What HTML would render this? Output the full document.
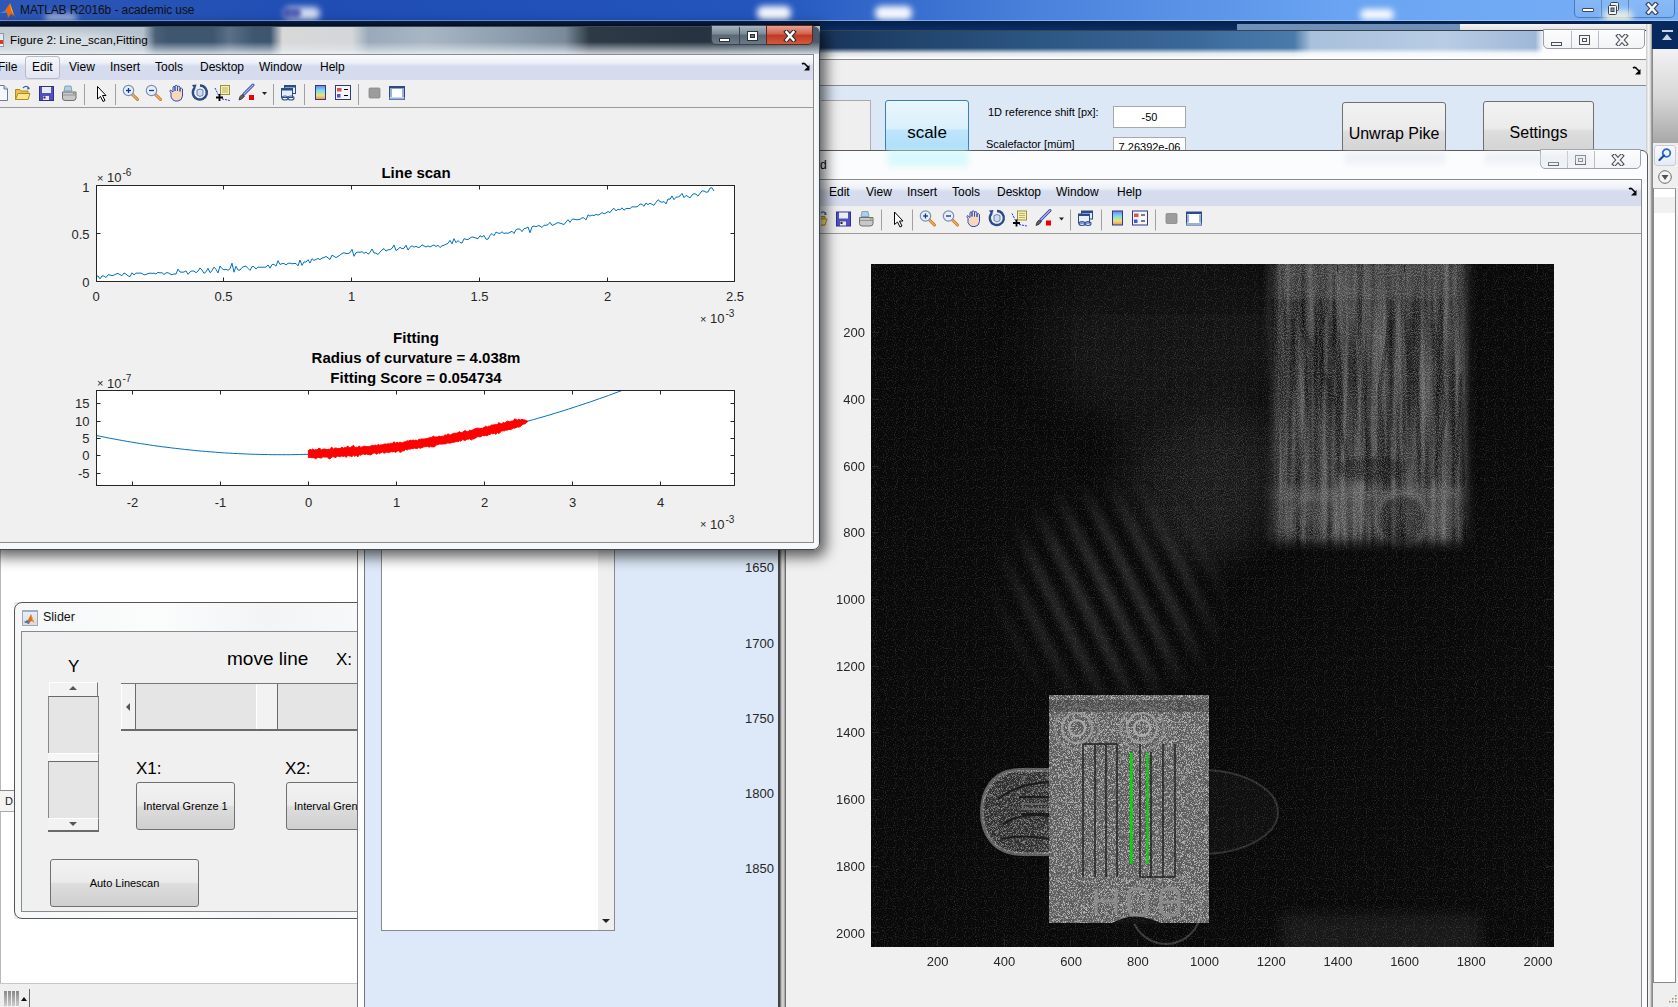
<!DOCTYPE html>
<html><head><meta charset="utf-8">
<style>
*{margin:0;padding:0;box-sizing:border-box}
html,body{width:1678px;height:1007px;overflow:hidden;background:#f0f0f0;font-family:"Liberation Sans",sans-serif;position:relative}
.a{position:absolute}
.t{position:absolute;white-space:nowrap;line-height:1}
</style></head><body>
<svg width="0" height="0" style="position:absolute"><defs><linearGradient id="cbgrad" x1="0" y1="0" x2="0" y2="1"><stop offset="0" stop-color="#8a70f0"/><stop offset=".35" stop-color="#70e0f0"/><stop offset=".7" stop-color="#f0e070"/><stop offset="1" stop-color="#f09060"/></linearGradient></defs></svg>
<div class="a" style="left:0;top:0;width:1678px;height:21px;background:linear-gradient(90deg,#2d58b8 0%,#1f4db4 20%,#2355bd 45%,#4a82dc 62%,#6aa4f2 80%,#78b0f6 100%)"></div>
<!-- CHROME_TOP -->
<div class="a" style="left:45px;top:14px;width:32px;height:7px;background:#fff;opacity:0.6;border-radius:6px;filter:blur(3px)"></div>
<div class="a" style="left:284px;top:7px;width:36px;height:13px;background:#fff;opacity:0.8;border-radius:6px;filter:blur(3px)"></div>
<div class="a" style="left:757px;top:6px;width:34px;height:14px;background:#fff;opacity:0.95;border-radius:6px;filter:blur(3px)"></div>
<div class="a" style="left:875px;top:6px;width:37px;height:14px;background:#fff;opacity:0.95;border-radius:6px;filter:blur(3px)"></div>
<div class="a" style="left:1360px;top:9px;width:34px;height:11px;background:#fff;opacity:0.95;border-radius:6px;filter:blur(3px)"></div>
<div class="a" style="left:283px;top:8px;width:18px;height:10px;background:#2030a0;opacity:.7;border-radius:4px;filter:blur(2px)"></div>
<svg class="a" style="left:0;top:2px" width="18" height="18" viewBox="0 0 18 18"><path d="M0 11 L5 8.5 L7 11 Z" fill="#3a8ad8"/><path d="M5 8.5 L10 1 L14 13 L16 15 L11 12 L8 16 L7 11 Z" fill="#e86a10"/><path d="M10 1 L14 13 L11 8 Z" fill="#f8b020"/></svg>
<div class="t" style="left:20px;top:4px;font-size:12px;letter-spacing:-0.1px;color:#101010">MATLAB R2016b - academic use</div>
<div class="a" style="left:1574px;top:-3px;width:101px;height:21px;border:1px solid rgba(40,70,130,.55);border-radius:0 0 5px 5px;background:linear-gradient(rgba(255,255,255,.15),rgba(255,255,255,.05))"></div>
<div class="a" style="left:1601px;top:0;width:1px;height:17px;background:rgba(40,70,130,.45)"></div>
<div class="a" style="left:1628px;top:0;width:1px;height:17px;background:rgba(40,70,130,.45)"></div>
<div class="a" style="left:1603px;top:10px;width:30px;height:12px;background:#fffbe0;opacity:.8;border-radius:8px;filter:blur(3px)"></div>
<div class="a" style="left:1582px;top:8px;width:12px;height:4px;background:#fff;border:1px solid #404858;border-radius:1px"></div>
<svg class="a" style="left:1606px;top:1px" width="16" height="15" viewBox="0 0 16 15"><rect x="4.5" y="1.5" width="8" height="8" rx="1" fill="#f0f0f0" stroke="#3a4250" stroke-width="1"/><rect x="2.5" y="4.5" width="8" height="9" rx="1" fill="#f4f4f4" stroke="#3a4250" stroke-width="1"/><rect x="5" y="7" width="3" height="3.5" fill="#7aa0d8" stroke="#3a4250" stroke-width="1"/></svg>
<svg class="a" style="left:1644px;top:2px" width="16" height="13" viewBox="0 0 16 13"><path d="M4.5 2.5 L11.5 10.5 M11.5 2.5 L4.5 10.5" stroke="#3a4250" stroke-width="4.8" stroke-linecap="square"/><path d="M4.5 2.5 L11.5 10.5 M11.5 2.5 L4.5 10.5" stroke="#f4f4f4" stroke-width="2.6" stroke-linecap="square"/></svg>
<!-- /CHROME_TOP -->
<div class="a" style="left:0;top:21px;width:1678px;height:5px;background:linear-gradient(#0a2250,#04152e)"></div>
<div class="a" style="left:0;top:20px;width:1678px;height:1px;background:rgba(190,215,250,.55)"></div>
<div class="a" style="left:820px;top:24px;width:832px;height:983px;background:#dde8f7"></div>
<div class="a" style="left:820px;top:21px;width:858px;height:10px;background:linear-gradient(#06204a,#0a3068)"></div>
<div class="a" style="left:1237px;top:24px;width:223px;height:7px;background:#7090b8"></div>
<div class="a" style="left:1460px;top:24px;width:192px;height:7px;background:linear-gradient(#f4f4f4,#e0e0e0)"></div>
<div class="a" style="left:820px;top:30px;width:832px;height:1px;background:#3a4450"></div>
<div class="a" style="left:820px;top:31px;width:832px;height:28px;background:linear-gradient(90deg,#18345a 0%,#22466e 12%,#2e5a88 30%,#3a6898 45%,#4272a4 50%,#4a7aa8 57%,#a8c0dc 59%,#b8cce4 75%,#a0b8d8 86%,#fcfcfd 87%,#ffffff 100%)"></div>
<div class="a" style="left:820px;top:48px;width:832px;height:11px;background:linear-gradient(rgba(255,255,255,0),rgba(255,255,255,.85) 50%,#fff)"></div>
<div class="a" style="left:1543px;top:29px;width:102px;height:20px;border:1px solid #9aa0a8;border-radius:0 0 5px 5px;background:linear-gradient(#fdfdfd,#f2f4f6)"></div>
<div class="a" style="left:1571px;top:31px;width:1px;height:17px;background:#b8bcc4"></div>
<div class="a" style="left:1598px;top:31px;width:1px;height:17px;background:#b8bcc4"></div>
<div class="a" style="left:1551px;top:42px;width:11px;height:4px;background:#f4f4f4;border:1px solid #4a5260"></div>
<div class="a" style="left:1579px;top:35px;width:11px;height:10px;background:#f4f4f4;border:1px solid #4a5260"><div class="a" style="left:2px;top:2px;width:5px;height:4px;background:#f4f4f4;border:1px solid #4a5260"></div></div>
<svg class="a" style="left:1614px;top:34px" width="16" height="12" viewBox="0 0 16 12"><path d="M4.5 2 L11.5 10 M11.5 2 L4.5 10" stroke="#4a5260" stroke-width="4.6" stroke-linecap="square"/><path d="M4.5 2 L11.5 10 M11.5 2 L4.5 10" stroke="#f4f4f4" stroke-width="2.4" stroke-linecap="square"/></svg>
<div class="a" style="left:820px;top:59px;width:826px;height:27px;background:#efefef;border-top:1px solid #8a8a8a;border-bottom:1px solid #8a8a8a"></div>
<svg class="a" style="left:1632px;top:66px" width="10" height="10" viewBox="0 0 10 10"><path d="M1 2 Q3 0.5 5 3 L7 5" fill="none" stroke="#000" stroke-width="1.6"/><path d="M8.5 3 V8.5 H3 Z" fill="#000"/></svg>
<div class="a" style="left:1646px;top:24px;width:6px;height:983px;background:linear-gradient(90deg,#c8c8c8,#f4f4f4 40%,#e0e0e0 70%,#8a8a8a)"></div>
<div class="a" style="left:821px;top:100px;width:50px;height:60px;background:#efefef;border-top:1px solid #a8a8a8;border-right:1px solid #b0b0b0"></div>
<div class="a" style="left:885px;top:100px;width:84px;height:60px;border:1px solid #3c7fb1;border-radius:3px;background:linear-gradient(#eaf6fd 0%,#d9f0fc 48%,#bee6fd 50%,#a7d9f5 100%)"></div>
<div class="t" style="left:885px;top:124px;width:84px;text-align:center;font-size:17px;color:#000">scale</div>
<div class="t" style="left:988px;top:107px;font-size:11px;color:#000">1D reference shift [px]:</div>
<div class="a" style="left:1113px;top:106px;width:73px;height:22px;background:#fff;border:1px solid #a8a8a8"></div>
<div class="t" style="left:1113px;top:112px;width:73px;text-align:center;font-size:11px;color:#000">-50</div>
<div class="t" style="left:986px;top:139px;font-size:11px;color:#000">Scalefactor [müm]</div>
<div class="a" style="left:1113px;top:137px;width:73px;height:22px;background:#fff;border:1px solid #a8a8a8"></div>
<div class="t" style="left:1113px;top:142px;width:73px;text-align:center;font-size:11px;color:#000">7.26392e-06</div>
<div class="a" style="left:1342px;top:102px;width:104px;height:60px;border:1px solid #707070;border-radius:3px;background:linear-gradient(#f2f2f2 0%,#ebebeb 45%,#dddddd 50%,#cfcfcf 100%)"></div>
<div class="t" style="left:1342px;top:126px;width:104px;text-align:center;font-size:16px;color:#000">Unwrap Pike</div>
<div class="a" style="left:1483px;top:101px;width:111px;height:60px;border:1px solid #707070;border-radius:3px;background:linear-gradient(#f2f2f2 0%,#ebebeb 45%,#dddddd 50%,#cfcfcf 100%)"></div>
<div class="t" style="left:1483px;top:125px;width:111px;text-align:center;font-size:16px;color:#000">Settings</div>
<div class="a" style="left:1652px;top:21px;width:26px;height:986px;background:#efefef;border-left:1px solid #8a8a8a"></div>
<div class="a" style="left:1652px;top:21px;width:26px;height:28px;background:#08295e"></div>
<div class="a" style="left:1662px;top:30px;width:11px;height:2px;background:#c8d4e4"></div>
<div class="a" style="left:1662px;top:34px;width:0;height:0;border-left:5.5px solid transparent;border-right:5.5px solid transparent;border-bottom:6px solid #c8d4e4"></div>
<div class="a" style="left:1653px;top:49px;width:25px;height:94px;background:linear-gradient(#f2f2f2,#d8d8d8 50%,#a8a8a8)"></div>
<div class="a" style="left:1653px;top:143px;width:25px;height:25px;background:#efefef"></div>
<div class="a" style="left:1654px;top:145px;width:22px;height:21px;border:1px solid #c8ccd8;border-radius:3px;background:linear-gradient(#f8faff,#e4eaf6)"></div>
<svg class="a" style="left:1657px;top:147px" width="16" height="16" viewBox="0 0 16 16"><circle cx="9.5" cy="6" r="3.8" fill="none" stroke="#2a6ad0" stroke-width="1.8"/><path d="M7 8.5 L2.5 13" stroke="#1a4aa0" stroke-width="2.2" stroke-linecap="round"/></svg>
<svg class="a" style="left:1657px;top:169px" width="16" height="16" viewBox="0 0 16 16"><circle cx="8" cy="8" r="6.3" fill="#f4f4f4" stroke="#6a6a6a" stroke-width="1"/><path d="M4.5 6 H11.5 L8 11 Z" fill="#505050"/></svg>
<div class="a" style="left:1653px;top:188px;width:23px;height:795px;background:#fff;border:1px solid #8a8a8a;border-top:1px solid #b0b0b0"></div>
<div class="a" style="left:1654px;top:197px;width:21px;height:16px;background:#f0f0f0"></div>
<svg class="a" style="left:1666px;top:994px" width="12" height="12" viewBox="0 0 12 12"><g fill="#a09070"><rect x="9" y="1" width="1.5" height="1.5"/><rect x="6" y="4" width="1.5" height="1.5"/><rect x="9" y="4" width="1.5" height="1.5"/><rect x="3" y="7" width="1.5" height="1.5"/><rect x="6" y="7" width="1.5" height="1.5"/><rect x="9" y="7" width="1.5" height="1.5"/></g></svg>
<!-- bottom-left white area (main MATLAB) -->
<div class="a" style="left:0;top:549px;width:357px;height:435px;background:#fff;border-left:1px solid #b8b8b8"></div>
<div class="a" style="left:0;top:790px;width:14px;height:22px;background:#f4f4f4;border-top:1px solid #8c8c8c;border-bottom:1px solid #aaa"></div>
<div class="t" style="left:5px;top:796px;font-size:11px;color:#222">D</div>
<div class="a" style="left:0;top:983px;width:357px;height:24px;background:#efefef;border-top:1px solid #c8c8c8"></div>
<div class="a" style="left:4px;top:991px;width:3px;height:15px;background:linear-gradient(#888,#ccc)"></div>
<div class="a" style="left:8px;top:991px;width:3px;height:15px;background:linear-gradient(#888,#ccc)"></div>
<div class="a" style="left:12px;top:991px;width:3px;height:15px;background:linear-gradient(#888,#ccc)"></div>
<div class="a" style="left:16px;top:991px;width:3px;height:15px;background:linear-gradient(#888,#ccc)"></div>
<div class="a" style="left:21px;top:997px;width:0;height:0;border-left:3px solid transparent;border-right:3px solid transparent;border-bottom:4px solid #111"></div>
<div class="a" style="left:29px;top:989px;width:1px;height:18px;background:#666"></div>


<!-- Slider window -->
<div class="a" style="left:14px;top:602px;width:343px;height:317px;overflow:hidden">
  <div class="a" style="left:0;top:0;width:360px;height:317px;background:linear-gradient(90deg,#f6f7f8,#fbfcfc 40%,#f2f4f6 70%,#f8f9fa);border:1px solid #555;border-radius:8px;box-shadow:0 0 8px rgba(0,0,0,.3)"></div>
  <div class="a" style="left:8px;top:8px;width:16px;height:16px;background:linear-gradient(#e8eef4,#d8dde4);border:1px solid #a0a8b0;border-top:2px solid #9ab0c8"></div>
  <svg class="a" style="left:8px;top:9px" width="16" height="16" viewBox="0 0 16 16"><path d="M2 11 L6 9 L9 3 L12 11 L14 12 L9 10 L7 13 Z" fill="#e06a1a"/><path d="M2 11 L6 9 L7 13 Z" fill="#3a7ad0"/><path d="M9 3 L12 11 L10 9 Z" fill="#f4b030"/></svg>
  <div class="t" style="left:29px;top:9px;font-size:12.5px;color:#111">Slider</div>
  <div class="a" style="left:7px;top:29px;width:340px;height:281px;background:#f0f0f0;border:1px solid #8a8a8a"></div>
</div>
<div class="t" style="left:68px;top:658px;font-size:17px;color:#000">Y</div>
<div class="t" style="left:227px;top:649px;font-size:19px;color:#000">move line</div>
<div class="t" style="left:336px;top:651px;font-size:17px;color:#000">X:</div>
<div class="t" style="left:136px;top:760px;font-size:17px;color:#000">X1:</div>
<div class="t" style="left:285px;top:760px;font-size:17px;color:#000">X2:</div>
<!-- vertical scrollbar Y -->
<div class="a" style="left:48px;top:681px;width:51px;height:151px;background:#f0f0f0"></div>
<div class="a" style="left:49px;top:682px;width:49px;height:14px;background:#f2f2f2;border-top:1px solid #fff;border-left:1px solid #fff;border-right:1px solid #777"></div>
<div class="a" style="left:69px;top:686px;width:0;height:0;border-left:4px solid transparent;border-right:4px solid transparent;border-bottom:4px solid #555"></div>
<div class="a" style="left:48px;top:696px;width:51px;height:57px;background:#e5e5e5;border-top:1px solid #6a6a6a;border-left:1px solid #888;border-right:1px solid #888"></div>
<div class="a" style="left:48px;top:753px;width:51px;height:8px;background:#f6f6f6;border-top:1px solid #fff;border-right:1px solid #888"></div>
<div class="a" style="left:48px;top:761px;width:51px;height:57px;background:#e5e5e5;border-top:1px solid #6a6a6a;border-left:1px solid #888;border-right:1px solid #888"></div>
<div class="a" style="left:48px;top:818px;width:51px;height:14px;background:#f2f2f2;border-top:1px solid #fff;border-right:1px solid #777;border-bottom:2px solid #6a6a6a"></div>
<div class="a" style="left:69px;top:822px;width:0;height:0;border-left:4px solid transparent;border-right:4px solid transparent;border-top:4px solid #555"></div>
<!-- horizontal slider -->
<div class="a" style="left:121px;top:683px;width:236px;height:48px;background:#e5e5e5;border-top:1px solid #777;border-bottom:2px solid #6a6a6a"></div>
<div class="a" style="left:121px;top:684px;width:15px;height:45px;background:#f2f2f2;border-left:1px solid #fff;border-right:1px solid #6a6a6a"></div>
<div class="a" style="left:126px;top:703px;width:0;height:0;border-top:4px solid transparent;border-bottom:4px solid transparent;border-right:4px solid #555"></div>
<div class="a" style="left:256px;top:684px;width:22px;height:45px;background:#f2f2f2;border-left:1px solid #fff;border-right:1px solid #6a6a6a"></div>
<!-- buttons -->
<div class="a" style="left:136px;top:782px;width:99px;height:48px;border:1px solid #707070;border-radius:3px;background:linear-gradient(#f2f2f2 0%,#ebebeb 48%,#dddddd 52%,#cfcfcf 100%)"></div>
<div class="t" style="left:136px;top:801px;width:99px;text-align:center;font-size:11px;color:#000">Interval Grenze 1</div>
<div class="a" style="left:286px;top:782px;width:80px;height:48px;border:1px solid #707070;border-radius:3px;background:linear-gradient(#f2f2f2 0%,#ebebeb 48%,#dddddd 52%,#cfcfcf 100%)"></div>
<div class="t" style="left:294px;top:801px;font-size:11px;color:#000">Interval Gren</div>
<div class="a" style="left:50px;top:859px;width:149px;height:48px;border:1px solid #707070;border-radius:3px;background:linear-gradient(#f2f2f2 0%,#ebebeb 48%,#dddddd 52%,#cfcfcf 100%)"></div>
<div class="t" style="left:50px;top:878px;width:149px;text-align:center;font-size:11px;color:#000">Auto Linescan</div>

<!-- middle back-window area -->
<div class="a" style="left:357px;top:549px;width:8px;height:458px;background:#fff;border-left:1px solid #777;border-right:1px solid #777"></div>
<div class="a" style="left:365px;top:549px;width:414px;height:458px;background:#dde9f8"></div>
<div class="a" style="left:381px;top:549px;width:234px;height:382px;background:#fff;border:1px solid #8a8a8a;border-top:none"></div>
<div class="a" style="left:598px;top:549px;width:16px;height:381px;background:#efefef"></div>
<div class="a" style="left:602px;top:919px;width:0;height:0;border-left:4px solid transparent;border-right:4px solid transparent;border-top:4px solid #222"></div>
<div class="t" style="left:730px;top:561px;width:44px;text-align:right;font-size:13px;color:#262626">1650</div>
<div class="t" style="left:730px;top:637px;width:44px;text-align:right;font-size:13px;color:#262626">1700</div>
<div class="t" style="left:730px;top:712px;width:44px;text-align:right;font-size:13px;color:#262626">1750</div>
<div class="t" style="left:730px;top:787px;width:44px;text-align:right;font-size:13px;color:#262626">1800</div>
<div class="t" style="left:730px;top:862px;width:44px;text-align:right;font-size:13px;color:#262626">1850</div>
<div class="a" style="left:778px;top:549px;width:8px;height:458px;background:linear-gradient(90deg,#333 0,#555 1px,#aaa 2px,#ddd 4px,#999 6px,#444 7px,#444 8px)"></div>

<div class="a" style="left:779px;top:150px;width:869px;height:870px;background:#fbfcfd;border-radius:6px 6px 0 0;border:1px solid #5a5a5a"></div>
<div class="a" style="left:779px;top:549px;width:8px;height:458px;background:linear-gradient(90deg,#333 0,#555 1px,#aaa 2px,#ddd 4px,#999 6px,#444 7px,#444 8px)"></div>
<div class="a" style="left:1540px;top:149px;width:101px;height:20px;border:1px solid #9aa0a8;border-radius:0 0 5px 5px;background:linear-gradient(#fdfdfd,#f2f4f6)"></div>
<div class="a" style="left:1567px;top:151px;width:1px;height:17px;background:#b8bcc4"></div>
<div class="a" style="left:1594px;top:151px;width:1px;height:17px;background:#b8bcc4"></div>
<div class="a" style="left:1548px;top:162px;width:11px;height:4px;background:#f4f4f4;border:1px solid #4a5260"></div>
<div class="a" style="left:1575px;top:155px;width:11px;height:10px;background:#f4f4f4;border:1px solid #4a5260"><div class="a" style="left:2px;top:2px;width:5px;height:4px;background:#f4f4f4;border:1px solid #4a5260"></div></div>
<svg class="a" style="left:1610px;top:154px" width="16" height="12" viewBox="0 0 16 12"><path d="M4.5 2 L11.5 10 M11.5 2 L4.5 10" stroke="#4a5260" stroke-width="4.6" stroke-linecap="square"/><path d="M4.5 2 L11.5 10 M11.5 2 L4.5 10" stroke="#f4f4f4" stroke-width="2.4" stroke-linecap="square"/></svg>
<div class="t" style="left:820px;top:159px;font-size:12px;color:#000">d</div>
<div class="a" style="left:888px;top:150px;width:80px;height:16px;background:rgba(200,248,252,.7);filter:blur(3px)"></div>
<div class="a" style="left:1345px;top:152px;width:100px;height:12px;background:rgba(225,232,240,.5);filter:blur(3px)"></div>
<div class="a" style="left:1485px;top:152px;width:105px;height:12px;background:rgba(225,232,240,.5);filter:blur(3px)"></div>
<div class="a" style="left:786px;top:179px;width:856px;height:28px;background:linear-gradient(#fafbfd 0%,#eef1f8 30%,#d5dcee 45%,#d6dcee 100%);border-top:1px solid #8a8a8a;border-bottom:1px solid #8a8a8a;border-right:1px solid #8a8a8a"></div>
<div class="a" style="left:786px;top:206px;width:856px;height:28px;background:#f0f0f0;border-bottom:1px solid #9a9a9a;border-right:1px solid #8a8a8a"></div>
<div class="a" style="left:786px;top:234px;width:856px;height:773px;background:#f0f0f0;border-right:1px solid #8a8a8a"></div>
<div class="t" style="left:829px;top:186px;font-size:12px;color:#000">Edit</div>
<div class="t" style="left:866px;top:186px;font-size:12px;color:#000">View</div>
<div class="t" style="left:907px;top:186px;font-size:12px;color:#000">Insert</div>
<div class="t" style="left:952px;top:186px;font-size:12px;color:#000">Tools</div>
<div class="t" style="left:997px;top:186px;font-size:12px;color:#000">Desktop</div>
<div class="t" style="left:1056px;top:186px;font-size:12px;color:#000">Window</div>
<div class="t" style="left:1117px;top:186px;font-size:12px;color:#000">Help</div>
<svg class="a" style="left:1628px;top:187px" width="10" height="10" viewBox="0 0 10 10"><path d="M1 2 Q3 0.5 5 3 L7 5" fill="none" stroke="#000" stroke-width="1.6"/><path d="M8.5 3 V8.5 H3 Z" fill="#000"/></svg>
<svg class="a" style="left:813px;top:0" width="420" height="240" viewBox="813 0 420 240"><defs><clipPath id="clipfig1tb"><rect x="821" y="200" width="420" height="40"/></clipPath></defs><g clip-path="url(#clipfig1tb)"><g transform="translate(797 125.5)">
<path d="M-4 85.5 H4 L7.5 89 V100.5 H-4 Z" fill="#f4f8fc" stroke="#6a7a9a" stroke-width="1"/><path d="M4 85.5 V89 H7.5" fill="#c8d4e8" stroke="#6a7a9a"/>
<path d="M15.5 89.5 H20 L21.5 91 H28 V99.5 H15.5 Z" fill="#e8c050" stroke="#b08a20"/><path d="M15.5 99.5 L18 93.5 H30 L28 99.5 Z" fill="#fce68a" stroke="#b08a20"/><path d="M23 88 Q26 85 29 88" fill="none" stroke="#3060a0" stroke-width="1.2"/><path d="M28 86.5 L30 89 L27 89.5 Z" fill="#3060a0"/>
<rect x="39.5" y="86.5" width="14" height="14" fill="#5050c0" stroke="#30308a"/><rect x="42" y="87" width="9" height="6" fill="#e8eef8"/><rect x="43" y="96" width="6" height="4" fill="#e8e8e8"/><rect x="43.5" y="96.5" width="2" height="2" fill="#222"/>
<path d="M65 86 H71 L72 91 H64 Z" fill="#a8d0f0" stroke="#8090a0" stroke-width=".8"/><path d="M62.5 92 H76 V98 Q76 100.5 73 100.5 H65 Q62.5 100.5 62.5 98 Z" fill="#c8c8c8" stroke="#707070" stroke-width="1"/><path d="M63 95 H76" stroke="#888" stroke-width=".8"/><rect x="73" y="93" width="1.5" height="1" fill="#30b030"/>
<path d="M84.5 84 V105" stroke="#a0a0a0" stroke-width="1"/>
<path d="M115.5 84 V105" stroke="#a0a0a0" stroke-width="1"/>
<path d="M273.5 84 V105" stroke="#a0a0a0" stroke-width="1"/>
<path d="M304.5 84 V105" stroke="#a0a0a0" stroke-width="1"/>
<path d="M358.5 84 V105" stroke="#a0a0a0" stroke-width="1"/>
<path d="M97.5 86.5 V99 L100.5 96.5 L103 101.5 L105 100.5 L102.5 95.5 H106 Z" fill="#fff" stroke="#000" stroke-width="1" stroke-linejoin="miter"/>
<path d="M132.5 94.5 L137.5 99.5" stroke="#c07020" stroke-width="3" stroke-linecap="round"/><path d="M132.5 94.5 L137.5 99.5" stroke="#f0b060" stroke-width="1.5" stroke-linecap="round"/>
<circle cx="128.5" cy="90.5" r="5.2" fill="#e4f0fc" stroke="#7890b8" stroke-width="1.2"/>
<path d="M126.0 90.5 H131.0" stroke="#203080" stroke-width="1.3"/>
<path d="M128.5 88 V93" stroke="#203080" stroke-width="1.3"/>
<path d="M155.5 94.5 L160.5 99.5" stroke="#c07020" stroke-width="3" stroke-linecap="round"/><path d="M155.5 94.5 L160.5 99.5" stroke="#f0b060" stroke-width="1.5" stroke-linecap="round"/>
<circle cx="151.5" cy="90.5" r="5.2" fill="#e4f0fc" stroke="#7890b8" stroke-width="1.2"/>
<path d="M149.0 90.5 H154.0" stroke="#203080" stroke-width="1.3"/>
<path d="M171 93 Q169 91 170.5 90 L173 92 V87 Q174 85.5 175 87 V91 V86 Q176 84.5 177.5 86 V91 V86.5 Q179 85.5 180 87 V91.5 V88.5 Q181.5 87.5 182.5 89 V96 Q182 100.5 178 101 H175 Q172.5 100.5 171 97 Z" fill="#f8d8b8" stroke="#3050c0" stroke-width="1"/>
<path d="M194.5 88 A7 7 0 1 0 200 85.5" fill="none" stroke="#2a4a88" stroke-width="2.4"/><path d="M192 85 L196.5 84.5 L195 89.5 Z" fill="#2a4a88"/><path d="M197 90 L200 89 L203 90 V95 L200 96.5 L197 95 Z" fill="#d0dcf0" stroke="#4a6aa8" stroke-width=".8"/>
<rect x="220.5" y="85.5" width="9" height="9" fill="#f8f0b0" stroke="#9a9040"/><path d="M222 88 H228 M222 90 H228 M222 92 H228" stroke="#a09850" stroke-width=".7"/><path d="M215 88 L219 96 M222 99 L230 100.5" stroke="#2030f0" stroke-width="1" stroke-dasharray="2 1"/><path d="M219.5 94 V101 M216 97.5 H223" stroke="#000" stroke-width="1.8"/>
<path d="M244 94 L253 85" stroke="#3040a0" stroke-width="3" stroke-linecap="round"/><path d="M244 94 L253 85" stroke="#a8b8f0" stroke-width="1.2" stroke-linecap="round"/><path d="M239 100 Q239.5 96 242 94.5 L244.5 96 Q242.5 99.5 239 100 Z" fill="#606060" stroke="#303030" stroke-width=".8"/><rect x="249" y="95" width="5" height="5" fill="#f00000"/>
<path d="M262 92 H267 L264.5 95 Z" fill="#202020"/>
<rect x="284.5" y="85.5" width="11" height="8" fill="#e8eef8" stroke="#2a4a8a"/><rect x="284.5" y="85.5" width="11" height="2" fill="#2a4a8a"/><rect x="281.5" y="88.5" width="11" height="9" fill="#e8eef8" stroke="#2a4a8a"/><rect x="281.5" y="88.5" width="11" height="2" fill="#2a4a8a"/><ellipse cx="285" cy="98" rx="3" ry="2" fill="none" stroke="#3a5a9a" stroke-width="1.2"/><ellipse cx="291" cy="98" rx="3" ry="2" fill="none" stroke="#3a5a9a" stroke-width="1.2"/>
<rect x="315.5" y="85.5" width="10" height="14" fill="url(#cbgrad)" stroke="#2a3a88"/>
<rect x="335.5" y="85.5" width="15" height="14" fill="#f4f6fa" stroke="#2a3a88"/><rect x="337" y="88" width="4.5" height="3.5" fill="#e05050"/><rect x="337" y="94" width="3.5" height="3.5" fill="#5050e0"/><path d="M344 89.5 H348 M344 95.5 H348" stroke="#000" stroke-width="1.2"/>
<rect x="369" y="88" width="11" height="10" rx="1" fill="#9c9c9c" stroke="#888" stroke-width=".8"/>
<rect x="389.5" y="86.5" width="15" height="13" fill="#fff" stroke="#2a4a8a" stroke-width="1"/><rect x="389.5" y="86.5" width="15" height="2" fill="#2a4a8a"/><rect x="389.5" y="97.5" width="15" height="2" fill="#9ab0d8"/><path d="M391 89 V97 M403 89 V97" stroke="#9ab0d8" stroke-width="2"/>
</g></g></svg>
<!-- IMAGE -->
<svg class="a" style="left:871px;top:264px" width="683" height="683" viewBox="0 0 683 683">
<defs>
<filter id="noise" x="0" y="0" width="100%" height="100%" color-interpolation-filters="sRGB">
  <feTurbulence type="fractalNoise" baseFrequency="0.9" numOctaves="1" seed="3" result="n"/>
  <feColorMatrix in="n" type="matrix" values="0 0 0 0 1  0 0 0 0 1  0 0 0 0 1  5 0 0 0 -2.6"/>
</filter>
<filter id="noise2" x="0" y="0" width="100%" height="100%" color-interpolation-filters="sRGB">
  <feTurbulence type="fractalNoise" baseFrequency="1.6" numOctaves="1" seed="11" result="n"/>
  <feColorMatrix in="n" type="matrix" values="0 0 0 0 1  0 0 0 0 1  0 0 0 0 1  5 0 0 0 -2.3"/>
</filter>
<filter id="noise3" x="0" y="0" width="100%" height="100%" color-interpolation-filters="sRGB">
  <feTurbulence type="fractalNoise" baseFrequency="0.95" numOctaves="1" seed="21" result="n"/>
  <feColorMatrix in="n" type="matrix" values="0 0 0 0 1  0 0 0 0 1  0 0 0 0 1  5 0 0 0 -2.2"/>
</filter>
<filter id="streak" x="0" y="0" width="100%" height="100%" color-interpolation-filters="sRGB">
  <feTurbulence type="fractalNoise" baseFrequency="0.14 0.006" numOctaves="3" seed="5" result="n"/>
  <feColorMatrix in="n" type="matrix" values="0.55 0 0 0 -0.075  0.55 0 0 0 -0.075  0.55 0 0 0 -0.075  0 0 0 0 1"/>
</filter>
<filter id="blur8" x="-50%" y="-50%" width="200%" height="200%" color-interpolation-filters="sRGB"><feGaussianBlur stdDeviation="8"/></filter>
<filter id="blur16" x="-50%" y="-50%" width="200%" height="200%" color-interpolation-filters="sRGB"><feGaussianBlur stdDeviation="18"/></filter>
<filter id="blur6" x="-50%" y="-50%" width="200%" height="200%" color-interpolation-filters="sRGB"><feGaussianBlur stdDeviation="6"/></filter>
<filter id="blur4" x="-50%" y="-50%" width="200%" height="200%" color-interpolation-filters="sRGB"><feGaussianBlur stdDeviation="4"/></filter>
<filter id="blur3" x="-50%" y="-50%" width="200%" height="200%" color-interpolation-filters="sRGB"><feGaussianBlur stdDeviation="3"/></filter>
<filter id="blur2" x="-50%" y="-50%" width="200%" height="200%" color-interpolation-filters="sRGB"><feGaussianBlur stdDeviation="2"/></filter>
<filter id="blur1" x="-50%" y="-50%" width="200%" height="200%" color-interpolation-filters="sRGB"><feGaussianBlur stdDeviation="0.7"/></filter>
<radialGradient id="stripemask" cx="0.5" cy="0.5" r="0.5">
  <stop offset="0" stop-color="#fff" stop-opacity="1"/>
  <stop offset="0.6" stop-color="#fff" stop-opacity="0.7"/>
  <stop offset="1" stop-color="#fff" stop-opacity="0"/>
</radialGradient>
<mask id="sm"><ellipse cx="240" cy="330" rx="125" ry="120" fill="url(#stripemask)"/></mask>
<mask id="halo"><ellipse cx="330" cy="200" rx="75" ry="95" fill="#fff" filter="url(#blur16)"/><ellipse cx="300" cy="80" rx="120" ry="90" fill="#777" filter="url(#blur16)"/></mask>
<mask id="urm"><rect x="402" y="-10" width="192" height="288" fill="#fff" filter="url(#blur6)"/></mask>
<pattern id="stripes" width="26" height="683" patternUnits="userSpaceOnUse" patternTransform="rotate(-27)">
  <rect x="4" y="-50" width="11" height="800" fill="#383838" filter="url(#blur3)"/>
</pattern>
<clipPath id="img"><rect x="0" y="0" width="683" height="683"/></clipPath>
<clipPath id="lr"><rect x="178" y="431" width="160" height="228"/></clipPath>
</defs>
<g clip-path="url(#img)">
<rect x="0" y="0" width="683" height="683" fill="#090909"/>
<!-- broad faint glows -->
<ellipse cx="330" cy="210" rx="80" ry="90" fill="#111" filter="url(#blur16)"/>
<ellipse cx="290" cy="70" rx="130" ry="90" fill="#101010" filter="url(#blur16)"/>
<ellipse cx="345" cy="215" rx="40" ry="70" fill="#161616" filter="url(#blur16)"/>
<g mask="url(#halo)"><rect x="200" y="50" width="250" height="320" filter="url(#noise3)" opacity="0.1"/></g>
<!-- stripes -->
<g mask="url(#sm)"><rect x="0" y="150" width="683" height="400" fill="url(#stripes)" opacity="0.7"/></g>
<!-- upper-right textured rect -->
<g mask="url(#urm)"><rect x="380" y="-20" width="240" height="320" filter="url(#streak)"/>
<path d="M430 60 L465 140" stroke="#141414" stroke-width="5" opacity="0.5"/>
<path d="M465 140 L478 205" stroke="#141414" stroke-width="4" opacity="0.5"/>
<path d="M520 50 L508 130" stroke="#141414" stroke-width="4" opacity="0.5"/>
<path d="M508 130 L515 225" stroke="#141414" stroke-width="4" opacity="0.5"/>
<path d="M562 60 L575 150" stroke="#141414" stroke-width="5" opacity="0.5"/>
<path d="M575 150 L562 215" stroke="#141414" stroke-width="4" opacity="0.5"/>
<path d="M455 45 L442 105" stroke="#141414" stroke-width="3" opacity="0.5"/>
<path d="M590 110 L586 200" stroke="#141414" stroke-width="3" opacity="0.5"/>
<rect x="380" y="0" width="240" height="35" fill="#555" opacity="0.35" filter="url(#blur2)"/>
<rect x="380" y="228" width="240" height="34" fill="#555" opacity="0.3" filter="url(#blur2)"/>
<rect x="380" y="222" width="240" height="14" fill="#6a6a6a" opacity="0.35" filter="url(#blur4)"/>
<ellipse cx="531" cy="255" rx="26" ry="26" fill="#1a1a1a" opacity="0.5" stroke="#6a6a6a" stroke-width="4" filter="url(#blur2)"/>
<ellipse cx="445" cy="255" rx="25" ry="22" fill="none" stroke="#5a5a5a" stroke-width="3" opacity="0.6" filter="url(#blur2)"/>
<ellipse cx="500" cy="205" rx="35" ry="12" fill="#141414" opacity="0.6" filter="url(#blur2)"/>
<rect x="380" y="-20" width="240" height="320" filter="url(#noise3)" opacity="0.22"/>
</g>
<!-- left ellipse -->
<path d="M180 506 L150 506 C121 506 111 528 111 548 C111 570 123 590 152 590 L180 590 Z" fill="#2c2c2c" stroke="#5e5e5e" stroke-width="4" filter="url(#blur1)"/>
<clipPath id="le"><path d="M180 506 L150 506 C121 506 111 528 111 548 C111 570 123 590 152 590 L180 590 Z"/></clipPath><g clip-path="url(#le)"><rect x="110" y="500" width="150" height="100" filter="url(#noise2)" opacity="0.4"/></g>
<g stroke="#181818" stroke-width="2" fill="none" filter="url(#blur1)"><path d="M127 535 Q145 520 178 518 M148 533 H178 M150 550 H178 M132 560 Q150 548 178 552 M130 575 Q150 570 178 575"/></g><g stroke="#6a6a6a" stroke-width="1.5" fill="none" filter="url(#blur1)"><path d="M150 540 H176 M150 545 H176"/></g>
<ellipse cx="330" cy="548" rx="77" ry="42" fill="#0f0f0f" stroke="#303030" stroke-width="2" filter="url(#blur1)"/>
<!-- lower rect -->
<rect x="178" y="431" width="160" height="228" fill="#585858"/>
<g clip-path="url(#lr)"><rect x="178" y="431" width="160" height="228" filter="url(#noise2)" opacity="0.55"/></g>
<g fill="none" stroke="#a8a8a8" stroke-width="2.2" filter="url(#blur1)">
<circle cx="206" cy="464" r="8"/><circle cx="206" cy="464" r="15" opacity="0.7"/><circle cx="206" cy="464" r="22" opacity="0.4"/>
<circle cx="271" cy="464" r="8"/><circle cx="271" cy="464" r="15" opacity="0.7"/><circle cx="271" cy="464" r="22" opacity="0.4"/>
<circle cx="295" cy="645" r="35" opacity="0.3"/>
</g>
<g stroke="#1e1e1e" stroke-width="1.5">
<path d="M212 480 V613 M224 480 V613 M235 480 V613 M246 480 V613 M269 480 V613 M280 488 V613 M292 480 V613 M304 480 V613 M212 480 H246 M269 613 H304"/>
</g>
<g fill="none" stroke="#8a8a8a" stroke-width="3" filter="url(#blur1)">
<path d="M225 625 V650 M225 637 H245 M245 625 V650"/>
<rect x="258" y="625" width="18" height="26" rx="5"/>
<rect x="290" y="625" width="18" height="26" rx="6"/><path d="M290 638 H308"/>
</g>
<path d="M240 660 Q262 645 292 660 Z" fill="#101010"/>
<rect x="178" y="436" width="160" height="12" fill="#2a2a2a" opacity="0.35"/>
<!-- bottom streaks -->
<rect x="410" y="650" width="200" height="50" fill="#181818" filter="url(#blur6)"/>
<!-- speckle noise -->
<rect x="0" y="0" width="683" height="683" filter="url(#noise)" opacity="0.12"/>
<!-- green lines -->
<rect x="259" y="489" width="2.5" height="111" fill="#00dd00"/>
<rect x="275.5" y="489" width="2" height="111" fill="#00dd00"/>
<!-- ticks -->
<g stroke="#262626" stroke-width="1">
<path d="M1 68.5 H8 M1 135.5 H8 M1 202.5 H8 M1 268.5 H8 M1 335.5 H8 M1 402.5 H8 M1 468.5 H8 M1 535.5 H8 M1 602.5 H8 M1 668.5 H8"/>
<path d="M682 68.5 H675 M682 135.5 H675 M682 202.5 H675 M682 268.5 H675 M682 335.5 H675 M682 402.5 H675 M682 468.5 H675 M682 535.5 H675 M682 602.5 H675 M682 668.5 H675"/>
<path d="M66.5 682 V675 M133.5 682 V675 M199.5 682 V675 M266.5 682 V675 M333.5 682 V675 M399.5 682 V675 M466.5 682 V675 M533.5 682 V675 M599.5 682 V675 M666.5 682 V675"/>
<path d="M66.5 1 V8 M133.5 1 V8 M199.5 1 V8 M266.5 1 V8 M333.5 1 V8 M399.5 1 V8 M466.5 1 V8 M533.5 1 V8 M599.5 1 V8 M666.5 1 V8"/>
</g>
</g>
</svg>
<!-- /IMAGE -->
<!-- FIG1 LABELS -->
<svg class="a" style="left:790px;top:300px" width="780" height="680" viewBox="790 300 780 680" font-family="Liberation Sans, sans-serif" font-size="13" fill="#262626">
<text x="865" y="337.2" text-anchor="end">200</text>
<text x="937.7" y="966" text-anchor="middle">200</text>
<text x="865" y="403.9" text-anchor="end">400</text>
<text x="1004.4" y="966" text-anchor="middle">400</text>
<text x="865" y="470.6" text-anchor="end">600</text>
<text x="1071.1" y="966" text-anchor="middle">600</text>
<text x="865" y="537.3" text-anchor="end">800</text>
<text x="1137.8" y="966" text-anchor="middle">800</text>
<text x="865" y="604.0" text-anchor="end">1000</text>
<text x="1204.5" y="966" text-anchor="middle">1000</text>
<text x="865" y="670.7" text-anchor="end">1200</text>
<text x="1271.2" y="966" text-anchor="middle">1200</text>
<text x="865" y="737.4" text-anchor="end">1400</text>
<text x="1337.9" y="966" text-anchor="middle">1400</text>
<text x="865" y="804.1" text-anchor="end">1600</text>
<text x="1404.6" y="966" text-anchor="middle">1600</text>
<text x="865" y="870.8" text-anchor="end">1800</text>
<text x="1471.3" y="966" text-anchor="middle">1800</text>
<text x="865" y="937.5" text-anchor="end">2000</text>
<text x="1538.0" y="966" text-anchor="middle">2000</text>
</svg><!-- /FIG1 LABELS -->
<div class="a" style="left:-10px;top:26px;width:830px;height:524px;border-radius:7px;box-shadow:3px 4px 14px 3px rgba(0,0,0,.62)"></div>
<div class="a" style="left:-10px;top:26px;width:830px;height:524px;background:linear-gradient(#6a7a88 0,#6a7a88 28px,#e8ecf0 28px,#f6f8fa);border:1px solid #404a56;border-radius:7px"></div>
<div class="a" style="left:814px;top:54px;width:5px;height:490px;background:linear-gradient(90deg,#fafbfc,#eef1f4)"></div>
<div class="a" style="left:0;top:27px;width:819px;height:27px;border-radius:0 6px 0 0;background:linear-gradient(90deg,#c4ccd4 0%,#b4c0cc 17.5%,#4a6078 19%,#3e5670 20.5%,#3e5670 26%,#5a7088 28%,#3e5670 31%,#3e5670 33%,#d8d8d8 34.5%,#d4d6d8 43%,#9aaaba 45%,#a8b6c4 52%,#8e9eae 62%,#7a8a9a 69%,#2e3a46 72%,#263240 86%,#4a5a6a 100%)"></div>
<div class="a" style="left:0;top:27px;width:819px;height:27px;border-radius:0 6px 0 0;background:linear-gradient(rgba(255,255,255,0) 0%,rgba(255,255,255,0) 55%,rgba(230,236,242,.55) 85%,rgba(240,244,248,.8) 100%)"></div>
<div class="a" style="left:0;top:29px;width:160px;height:24px;background:radial-gradient(ellipse at 45% 50%,rgba(255,255,255,.55),rgba(255,255,255,0) 70%)"></div>
<div class="t" style="left:10px;top:34px;font-size:11.7px;color:#000">Figure 2: Line_scan,Fitting</div>
<div class="a" style="left:0;top:33px;width:4px;height:14px;background:linear-gradient(#d8e4f0,#f4f4f4);border:1px solid #8a98a8;border-left:none"></div><div class="a" style="left:0;top:40px;width:3px;height:4px;background:#d04020"></div>
<div class="a" style="left:711px;top:25px;width:56px;height:20px;border:1px solid #3a4450;border-right:none;border-radius:0 0 0 5px;background:linear-gradient(#a8b4c0 0%,#7a8896 45%,#5a6876 50%,#6a7886 100%)"></div>
<div class="a" style="left:739px;top:27px;width:1px;height:17px;background:#3a4450"></div>
<div class="a" style="left:766px;top:25px;width:47px;height:20px;border:1px solid #5a2a20;border-radius:0 0 5px 0;background:linear-gradient(#e8a090 0%,#d06050 45%,#c03820 50%,#d05a40 100%)"></div>
<div class="a" style="left:719px;top:38px;width:11px;height:4px;background:#fff;border:1px solid #2a3038"></div>
<div class="a" style="left:747px;top:31px;width:11px;height:10px;background:#fff;border:1px solid #2a3038"><div class="a" style="left:2px;top:2px;width:5px;height:4px;background:#6a7480;border:1px solid #2a3038"></div></div>
<svg class="a" style="left:782px;top:30px" width="16" height="12" viewBox="0 0 16 12"><path d="M4.5 2 L11.5 10 M11.5 2 L4.5 10" stroke="#2a3038" stroke-width="4.6" stroke-linecap="square"/><path d="M4.5 2 L11.5 10 M11.5 2 L4.5 10" stroke="#fff" stroke-width="2.4" stroke-linecap="square"/></svg>
<div class="a" style="left:0;top:54px;width:814px;height:27px;background:linear-gradient(#fafbfd 0%,#eef1f8 30%,#d5dcee 45%,#d6dcee 100%);border-top:1px solid #8a8a8a;border-bottom:1px solid #8a8a8a;border-right:1px solid #8a8a8a"></div>
<div class="a" style="left:0;top:80px;width:814px;height:28px;background:#f0f0f0;border-bottom:1px solid #9a9a9a;border-right:1px solid #8a8a8a"></div>
<div class="a" style="left:0;top:108px;width:814px;height:435px;background:#f0f0f0;border-right:1px solid #8a8a8a;border-bottom:1px solid #8a8a8a"></div>
<div class="a" style="left:25px;top:56px;width:35px;height:23px;border:1px solid #b8bcc8;border-radius:3px;background:linear-gradient(#f4f6fa,#e2e6f0)"></div>
<div class="t" style="left:-2px;top:61px;font-size:12px;color:#000">File</div>
<div class="t" style="left:32px;top:61px;font-size:12px;color:#000">Edit</div>
<div class="t" style="left:69px;top:61px;font-size:12px;color:#000">View</div>
<div class="t" style="left:110px;top:61px;font-size:12px;color:#000">Insert</div>
<div class="t" style="left:155px;top:61px;font-size:12px;color:#000">Tools</div>
<div class="t" style="left:200px;top:61px;font-size:12px;color:#000">Desktop</div>
<div class="t" style="left:259px;top:61px;font-size:12px;color:#000">Window</div>
<div class="t" style="left:320px;top:61px;font-size:12px;color:#000">Help</div>
<svg class="a" style="left:801px;top:62px" width="10" height="10" viewBox="0 0 10 10"><path d="M1 2 Q3 0.5 5 3 L7 5" fill="none" stroke="#000" stroke-width="1.6"/><path d="M8.5 3 V8.5 H3 Z" fill="#000"/></svg>
<svg class="a" style="left:0;top:0" width="420" height="110" viewBox="0 0 420 110"><g transform="translate(0 0)">
<path d="M-4 85.5 H4 L7.5 89 V100.5 H-4 Z" fill="#f4f8fc" stroke="#6a7a9a" stroke-width="1"/><path d="M4 85.5 V89 H7.5" fill="#c8d4e8" stroke="#6a7a9a"/>
<path d="M15.5 89.5 H20 L21.5 91 H28 V99.5 H15.5 Z" fill="#e8c050" stroke="#b08a20"/><path d="M15.5 99.5 L18 93.5 H30 L28 99.5 Z" fill="#fce68a" stroke="#b08a20"/><path d="M23 88 Q26 85 29 88" fill="none" stroke="#3060a0" stroke-width="1.2"/><path d="M28 86.5 L30 89 L27 89.5 Z" fill="#3060a0"/>
<rect x="39.5" y="86.5" width="14" height="14" fill="#5050c0" stroke="#30308a"/><rect x="42" y="87" width="9" height="6" fill="#e8eef8"/><rect x="43" y="96" width="6" height="4" fill="#e8e8e8"/><rect x="43.5" y="96.5" width="2" height="2" fill="#222"/>
<path d="M65 86 H71 L72 91 H64 Z" fill="#a8d0f0" stroke="#8090a0" stroke-width=".8"/><path d="M62.5 92 H76 V98 Q76 100.5 73 100.5 H65 Q62.5 100.5 62.5 98 Z" fill="#c8c8c8" stroke="#707070" stroke-width="1"/><path d="M63 95 H76" stroke="#888" stroke-width=".8"/><rect x="73" y="93" width="1.5" height="1" fill="#30b030"/>
<path d="M84.5 84 V105" stroke="#a0a0a0" stroke-width="1"/>
<path d="M115.5 84 V105" stroke="#a0a0a0" stroke-width="1"/>
<path d="M273.5 84 V105" stroke="#a0a0a0" stroke-width="1"/>
<path d="M304.5 84 V105" stroke="#a0a0a0" stroke-width="1"/>
<path d="M358.5 84 V105" stroke="#a0a0a0" stroke-width="1"/>
<path d="M97.5 86.5 V99 L100.5 96.5 L103 101.5 L105 100.5 L102.5 95.5 H106 Z" fill="#fff" stroke="#000" stroke-width="1" stroke-linejoin="miter"/>
<path d="M132.5 94.5 L137.5 99.5" stroke="#c07020" stroke-width="3" stroke-linecap="round"/><path d="M132.5 94.5 L137.5 99.5" stroke="#f0b060" stroke-width="1.5" stroke-linecap="round"/>
<circle cx="128.5" cy="90.5" r="5.2" fill="#e4f0fc" stroke="#7890b8" stroke-width="1.2"/>
<path d="M126.0 90.5 H131.0" stroke="#203080" stroke-width="1.3"/>
<path d="M128.5 88 V93" stroke="#203080" stroke-width="1.3"/>
<path d="M155.5 94.5 L160.5 99.5" stroke="#c07020" stroke-width="3" stroke-linecap="round"/><path d="M155.5 94.5 L160.5 99.5" stroke="#f0b060" stroke-width="1.5" stroke-linecap="round"/>
<circle cx="151.5" cy="90.5" r="5.2" fill="#e4f0fc" stroke="#7890b8" stroke-width="1.2"/>
<path d="M149.0 90.5 H154.0" stroke="#203080" stroke-width="1.3"/>
<path d="M171 93 Q169 91 170.5 90 L173 92 V87 Q174 85.5 175 87 V91 V86 Q176 84.5 177.5 86 V91 V86.5 Q179 85.5 180 87 V91.5 V88.5 Q181.5 87.5 182.5 89 V96 Q182 100.5 178 101 H175 Q172.5 100.5 171 97 Z" fill="#f8d8b8" stroke="#3050c0" stroke-width="1"/>
<path d="M194.5 88 A7 7 0 1 0 200 85.5" fill="none" stroke="#2a4a88" stroke-width="2.4"/><path d="M192 85 L196.5 84.5 L195 89.5 Z" fill="#2a4a88"/><path d="M197 90 L200 89 L203 90 V95 L200 96.5 L197 95 Z" fill="#d0dcf0" stroke="#4a6aa8" stroke-width=".8"/>
<rect x="220.5" y="85.5" width="9" height="9" fill="#f8f0b0" stroke="#9a9040"/><path d="M222 88 H228 M222 90 H228 M222 92 H228" stroke="#a09850" stroke-width=".7"/><path d="M215 88 L219 96 M222 99 L230 100.5" stroke="#2030f0" stroke-width="1" stroke-dasharray="2 1"/><path d="M219.5 94 V101 M216 97.5 H223" stroke="#000" stroke-width="1.8"/>
<path d="M244 94 L253 85" stroke="#3040a0" stroke-width="3" stroke-linecap="round"/><path d="M244 94 L253 85" stroke="#a8b8f0" stroke-width="1.2" stroke-linecap="round"/><path d="M239 100 Q239.5 96 242 94.5 L244.5 96 Q242.5 99.5 239 100 Z" fill="#606060" stroke="#303030" stroke-width=".8"/><rect x="249" y="95" width="5" height="5" fill="#f00000"/>
<path d="M262 92 H267 L264.5 95 Z" fill="#202020"/>
<rect x="284.5" y="85.5" width="11" height="8" fill="#e8eef8" stroke="#2a4a8a"/><rect x="284.5" y="85.5" width="11" height="2" fill="#2a4a8a"/><rect x="281.5" y="88.5" width="11" height="9" fill="#e8eef8" stroke="#2a4a8a"/><rect x="281.5" y="88.5" width="11" height="2" fill="#2a4a8a"/><ellipse cx="285" cy="98" rx="3" ry="2" fill="none" stroke="#3a5a9a" stroke-width="1.2"/><ellipse cx="291" cy="98" rx="3" ry="2" fill="none" stroke="#3a5a9a" stroke-width="1.2"/>
<rect x="315.5" y="85.5" width="10" height="14" fill="url(#cbgrad)" stroke="#2a3a88"/>
<rect x="335.5" y="85.5" width="15" height="14" fill="#f4f6fa" stroke="#2a3a88"/><rect x="337" y="88" width="4.5" height="3.5" fill="#e05050"/><rect x="337" y="94" width="3.5" height="3.5" fill="#5050e0"/><path d="M344 89.5 H348 M344 95.5 H348" stroke="#000" stroke-width="1.2"/>
<rect x="369" y="88" width="11" height="10" rx="1" fill="#9c9c9c" stroke="#888" stroke-width=".8"/>
<rect x="389.5" y="86.5" width="15" height="13" fill="#fff" stroke="#2a4a8a" stroke-width="1"/><rect x="389.5" y="86.5" width="15" height="2" fill="#2a4a8a"/><rect x="389.5" y="97.5" width="15" height="2" fill="#9ab0d8"/><path d="M391 89 V97 M403 89 V97" stroke="#9ab0d8" stroke-width="2"/>
</g></svg>
<!-- FIG2 CHARTS -->
<svg class="a" style="left:0;top:0" width="820" height="548" viewBox="0 0 820 548" font-family="Liberation Sans, sans-serif">
<rect x="96.5" y="185.5" width="638" height="96" fill="#fff"/>
<path d="M96 276.9 L98 275.9 L100 278.9 L102 275.8 L104 276.1 L106 277.6 L108 274.7 L110 275.0 L112 275.7 L114 275.1 L116 274.0 L118 273.4 L120 274.7 L122 275.6 L124 273.0 L126 274.0 L128 275.9 L130 276.6 L132 272.8 L134 275.0 L136 273.1 L138 273.2 L140 273.0 L142 273.4 L144 274.9 L146 274.5 L148 273.6 L150 273.1 L152 273.4 L154 273.1 L156 274.0 L158 272.3 L160 272.9 L162 272.7 L164 274.5 L166 272.9 L168 272.7 L170 273.9 L172 274.8 L174 273.9 L176 274.1 L178 269.1 L180 272.0 L182 272.2 L184 272.0 L186 270.9 L188 274.3 L190 271.9 L192 270.9 L194 271.1 L196 272.7 L198 271.2 L200 267.9 L202 270.0 L204 273.4 L206 271.8 L208 268.3 L210 272.7 L212 270.8 L214 267.1 L216 269.4 L218 273.0 L220 266.0 L222 268.5 L224 269.9 L226 269.2 L228 270.3 L230 268.8 L232 263.2 L234 272.2 L236 266.4 L238 270.0 L240 270.1 L242 267.5 L244 266.5 L246 266.1 L248 268.4 L250 270.4 L252 266.5 L254 266.7 L256 269.1 L258 267.0 L260 267.3 L262 267.2 L264 267.2 L266 267.1 L268 264.9 L270 268.2 L272 264.5 L274 264.4 L276 266.2 L278 260.7 L280 264.5 L282 263.6 L284 263.5 L286 264.9 L288 263.3 L290 263.1 L292 263.8 L294 263.5 L296 263.5 L298 265.9 L300 260.0 L302 265.4 L304 261.9 L306 262.1 L308 259.7 L310 263.1 L312 258.7 L314 260.5 L316 259.4 L318 258.5 L320 259.6 L322 258.1 L324 257.6 L326 256.4 L328 257.9 L330 259.5 L332 255.1 L334 256.3 L336 257.6 L338 256.4 L340 255.0 L342 253.5 L344 252.7 L346 253.5 L348 253.6 L350 252.7 L352 249.3 L354 256.3 L356 252.7 L358 252.1 L360 252.3 L362 251.6 L364 253.4 L366 252.1 L368 254.2 L370 252.5 L372 249.0 L374 253.0 L376 253.1 L378 254.6 L380 252.1 L382 249.9 L384 248.6 L386 251.1 L388 249.8 L390 249.6 L392 248.4 L394 245.0 L396 250.5 L398 249.2 L400 247.3 L402 248.7 L404 248.3 L406 245.2 L408 250.0 L410 247.3 L412 245.8 L414 247.2 L416 246.3 L418 247.5 L420 247.1 L422 244.8 L424 246.0 L426 247.0 L428 245.9 L430 246.9 L432 245.9 L434 244.9 L436 246.6 L438 245.2 L440 247.5 L442 245.8 L444 245.2 L446 244.2 L448 243.4 L450 240.3 L452 243.8 L454 238.7 L456 242.7 L458 240.5 L460 242.5 L462 243.1 L464 238.7 L466 239.3 L468 239.6 L470 238.1 L472 236.9 L474 237.4 L476 238.0 L478 238.7 L480 235.7 L482 237.1 L484 235.4 L486 239.2 L488 239.2 L490 235.3 L492 233.6 L494 235.7 L496 232.1 L498 233.1 L500 233.4 L502 231.8 L504 233.5 L506 232.9 L508 233.4 L510 232.2 L512 231.2 L514 233.5 L516 229.6 L518 228.9 L520 229.2 L522 231.6 L524 228.7 L526 228.2 L528 227.0 L530 232.7 L532 226.8 L534 226.0 L536 226.8 L538 225.7 L540 226.0 L542 227.5 L544 225.2 L546 225.3 L548 224.7 L550 222.3 L552 225.4 L554 224.8 L556 223.5 L558 222.6 L560 223.2 L562 223.8 L564 224.6 L566 222.0 L568 219.7 L570 222.4 L572 219.3 L574 219.1 L576 219.7 L578 219.7 L580 219.3 L582 217.9 L584 217.8 L586 219.9 L588 214.9 L590 216.1 L592 215.0 L594 215.6 L596 214.4 L598 215.1 L600 214.2 L602 212.5 L604 213.9 L606 212.9 L608 211.5 L610 212.7 L612 209.8 L614 208.3 L616 210.9 L618 209.2 L620 209.9 L622 207.8 L624 210.2 L626 208.6 L628 208.4 L630 208.6 L632 206.8 L634 206.9 L636 206.9 L638 206.3 L640 204.0 L642 204.4 L644 206.3 L646 203.0 L648 204.7 L650 203.1 L652 204.3 L654 205.3 L656 202.4 L658 199.7 L660 201.5 L662 202.3 L664 201.5 L666 203.9 L668 199.0 L670 199.3 L672 195.9 L674 199.7 L676 197.2 L678 197.1 L680 195.9 L682 193.4 L684 197.7 L686 195.4 L688 196.5 L690 197.9 L692 195.0 L694 193.6 L696 194.2 L698 196.1 L700 193.5 L702 190.8 L704 191.1 L706 192.2 L708 192.0 L710 188.1 L712 187.8 L714 191.1" fill="none" stroke="#0072bd" stroke-width="1" stroke-linejoin="round"/>
<g stroke="#262626" stroke-width="1" fill="none">
<rect x="96.5" y="185.5" width="638" height="96"/>
<path d="M223.5 281.5 V277.5 M223.5 185.5 V189.5" />
<path d="M351.5 281.5 V277.5 M351.5 185.5 V189.5" />
<path d="M479.5 281.5 V277.5 M479.5 185.5 V189.5" />
<path d="M607.5 281.5 V277.5 M607.5 185.5 V189.5" />
<path d="M96.5 233.5 H100.5 M734.5 233.5 H730.5" />
</g>
<g fill="#262626" font-size="13" text-anchor="middle">
<text x="96" y="300.5">0</text>
<text x="223.5" y="300.5">0.5</text>
<text x="351.5" y="300.5">1</text>
<text x="479.5" y="300.5">1.5</text>
<text x="607.5" y="300.5">2</text>
<text x="735" y="300.5">2.5</text>
</g><g fill="#262626" font-size="13" text-anchor="end">
<text x="89.5" y="191.5">1</text>
<text x="89.5" y="238.5">0.5</text>
<text x="89.5" y="286.5">0</text>
</g>
<text x="416" y="178" font-size="15" font-weight="bold" text-anchor="middle" fill="#000">Line scan</text>
<g fill="#262626"><text x="97" y="181.5" font-size="11">×</text><text x="107" y="182" font-size="13">10</text><text x="122.5" y="176" font-size="10">-6</text></g>
<g fill="#262626"><text x="700" y="322.5" font-size="11">×</text><text x="710" y="323" font-size="13">10</text><text x="725.5" y="317" font-size="10">-3</text></g>
<rect x="96.5" y="390.5" width="638" height="95" fill="#fff"/>
<defs><clipPath id="c2"><rect x="96.5" y="390.5" width="638" height="95"/></clipPath></defs>
<g clip-path="url(#c2)"><path d="M96.3 435.5 L100.7 436.4 L105.1 437.3 L109.6 438.2 L114.0 439.0 L118.4 439.8 L122.8 440.6 L127.2 441.4 L131.6 442.1 L136.1 442.9 L140.5 443.6 L144.9 444.2 L149.3 444.9 L153.7 445.6 L158.1 446.2 L162.5 446.8 L167.0 447.3 L171.4 447.9 L175.8 448.4 L180.2 448.9 L184.6 449.4 L189.0 449.9 L193.4 450.3 L197.9 450.8 L202.3 451.2 L206.7 451.5 L211.1 451.9 L215.5 452.2 L219.9 452.6 L224.3 452.9 L228.8 453.1 L233.2 453.4 L237.6 453.6 L242.0 453.8 L246.4 454.0 L250.8 454.2 L255.3 454.3 L259.7 454.4 L264.1 454.5 L268.5 454.6 L272.9 454.7 L277.3 454.7 L281.7 454.7 L286.2 454.7 L290.6 454.7 L295.0 454.6 L299.4 454.5 L303.8 454.4 L308.2 454.3 L312.6 454.2 L317.1 454.0 L321.5 453.8 L325.9 453.6 L330.3 453.4 L334.7 453.2 L339.1 452.9 L343.5 452.6 L348.0 452.3 L352.4 451.9 L356.8 451.6 L361.2 451.2 L365.6 450.8 L370.0 450.4 L374.5 449.9 L378.9 449.5 L383.3 449.0 L387.7 448.5 L392.1 448.0 L396.5 447.4 L400.9 446.8 L405.4 446.2 L409.8 445.6 L414.2 445.0 L418.6 444.3 L423.0 443.6 L427.4 442.9 L431.8 442.2 L436.3 441.5 L440.7 440.7 L445.1 439.9 L449.5 439.1 L453.9 438.3 L458.3 437.4 L462.7 436.5 L467.2 435.6 L471.6 434.7 L476.0 433.8 L480.4 432.8 L484.8 431.8 L489.2 430.8 L493.7 429.8 L498.1 428.7 L502.5 427.7 L506.9 426.6 L511.3 425.5 L515.7 424.3 L520.1 423.2 L524.6 422.0 L529.0 420.8 L533.4 419.6 L537.8 418.3 L542.2 417.1 L546.6 415.8 L551.0 414.5 L555.5 413.1 L559.9 411.8 L564.3 410.4 L568.7 409.0 L573.1 407.6 L577.5 406.1 L581.9 404.7 L586.4 403.2 L590.8 401.7 L595.2 400.2 L599.6 398.6 L604.0 397.1 L608.4 395.5 L612.9 393.8 L617.3 392.2 L621.7 390.6" fill="none" stroke="#0072bd" stroke-width="1"/>
<path d="M308.4 450.5 L309.9 449.4 L311.3 450.0 L312.8 448.9 L314.2 450.1 L315.7 449.6 L317.1 449.9 L318.6 448.3 L320.0 448.6 L321.5 449.9 L322.9 449.3 L324.4 449.0 L325.8 449.3 L327.3 449.6 L328.7 449.2 L330.2 449.5 L331.6 446.9 L333.1 449.2 L334.6 448.2 L336.0 448.0 L337.5 448.5 L338.9 448.6 L340.4 448.6 L341.8 447.0 L343.3 448.2 L344.7 447.5 L346.2 447.9 L347.6 445.8 L349.1 447.7 L350.5 447.5 L352.0 446.5 L353.4 445.3 L354.9 447.5 L356.3 447.3 L357.8 447.5 L359.3 445.8 L360.7 447.4 L362.2 446.9 L363.6 446.3 L365.1 446.4 L366.5 446.5 L368.0 446.8 L369.4 446.5 L370.9 446.0 L372.3 445.3 L373.8 445.7 L375.2 445.1 L376.7 445.8 L378.1 444.4 L379.6 445.2 L381.0 444.9 L382.5 444.8 L384.0 444.1 L385.4 444.0 L386.9 444.2 L388.3 443.6 L389.8 444.0 L391.2 443.4 L392.7 443.3 L394.1 441.7 L395.6 443.3 L397.0 442.3 L398.5 443.1 L399.9 442.1 L401.4 442.7 L402.8 442.7 L404.3 441.8 L405.7 441.8 L407.2 440.8 L408.6 441.0 L410.1 440.2 L411.6 440.6 L413.0 440.1 L414.5 440.5 L415.9 440.1 L417.4 440.7 L418.8 439.4 L420.3 439.2 L421.7 439.0 L423.2 439.1 L424.6 438.9 L426.1 438.7 L427.5 438.3 L429.0 438.0 L430.4 437.5 L431.9 437.4 L433.3 436.1 L434.8 437.1 L436.3 436.9 L437.7 436.9 L439.2 436.1 L440.6 436.5 L442.1 436.3 L443.5 436.2 L445.0 434.8 L446.4 435.4 L447.9 433.8 L449.3 434.8 L450.8 434.9 L452.2 434.0 L453.7 433.3 L455.1 433.3 L456.6 433.2 L458.0 432.7 L459.5 431.5 L461.0 433.0 L462.4 432.3 L463.9 431.2 L465.3 430.6 L466.8 431.7 L468.2 431.6 L469.7 430.2 L471.1 430.5 L472.6 430.0 L474.0 429.2 L475.5 428.6 L476.9 428.2 L478.4 428.2 L479.8 428.5 L481.3 428.3 L482.7 428.3 L484.2 427.3 L485.7 426.2 L487.1 427.2 L488.6 426.2 L490.0 426.3 L491.5 425.0 L492.9 425.1 L494.4 424.7 L495.8 424.4 L497.3 425.0 L498.7 422.6 L500.2 423.4 L501.6 424.0 L503.1 422.4 L504.5 423.0 L506.0 422.3 L507.4 420.9 L508.9 421.8 L510.4 421.5 L511.8 421.0 L513.3 421.1 L514.7 418.8 L516.2 419.6 L517.6 420.0 L519.1 419.4 L520.5 419.9 L522.0 419.4 L523.4 419.8 L524.9 420.0 L527.9 421.4 L524.9 423.8 L523.4 424.2 L522.0 424.8 L520.5 426.4 L519.1 427.0 L517.6 427.0 L516.2 427.6 L514.7 428.3 L513.3 428.1 L511.8 429.1 L510.4 429.7 L508.9 429.2 L507.4 430.2 L506.0 429.9 L504.5 430.8 L503.1 430.8 L501.6 431.0 L500.2 432.2 L498.7 433.8 L497.3 432.1 L495.8 434.5 L494.4 433.0 L492.9 434.0 L491.5 433.3 L490.0 434.5 L488.6 434.7 L487.1 435.8 L485.7 435.5 L484.2 435.8 L482.7 435.3 L481.3 436.6 L479.8 436.9 L478.4 436.5 L476.9 437.0 L475.5 438.0 L474.0 438.8 L472.6 439.1 L471.1 440.1 L469.7 438.7 L468.2 439.2 L466.8 439.1 L465.3 440.6 L463.9 440.0 L462.4 439.6 L461.0 441.2 L459.5 440.7 L458.0 441.7 L456.6 441.6 L455.1 441.9 L453.7 442.3 L452.2 442.4 L450.8 442.9 L449.3 443.2 L447.9 442.8 L446.4 443.6 L445.0 443.9 L443.5 443.9 L442.1 444.1 L440.6 444.1 L439.2 444.1 L437.7 444.6 L436.3 445.1 L434.8 446.5 L433.3 446.9 L431.9 446.8 L430.4 446.6 L429.0 447.2 L427.5 446.2 L426.1 446.6 L424.6 446.7 L423.2 447.1 L421.7 447.7 L420.3 448.3 L418.8 447.5 L417.4 448.4 L415.9 448.4 L414.5 448.1 L413.0 448.5 L411.6 448.6 L410.1 449.1 L408.6 449.1 L407.2 450.1 L405.7 449.3 L404.3 450.7 L402.8 450.8 L401.4 451.8 L399.9 452.4 L398.5 450.4 L397.0 451.3 L395.6 452.5 L394.1 451.4 L392.7 451.9 L391.2 451.6 L389.8 452.2 L388.3 452.6 L386.9 451.9 L385.4 452.8 L384.0 453.2 L382.5 452.1 L381.0 452.5 L379.6 453.7 L378.1 452.6 L376.7 454.4 L375.2 452.9 L373.8 453.0 L372.3 453.8 L370.9 454.9 L369.4 454.7 L368.0 454.4 L366.5 454.0 L365.1 454.6 L363.6 454.0 L362.2 454.2 L360.7 455.2 L359.3 454.7 L357.8 456.9 L356.3 455.0 L354.9 456.4 L353.4 455.1 L352.0 456.7 L350.5 456.0 L349.1 455.9 L347.6 455.4 L346.2 457.4 L344.7 456.0 L343.3 456.4 L341.8 455.9 L340.4 456.7 L338.9 456.3 L337.5 456.0 L336.0 457.5 L334.6 457.2 L333.1 456.5 L331.6 457.2 L330.2 458.9 L328.7 458.6 L327.3 456.9 L325.8 457.0 L324.4 457.1 L322.9 456.8 L321.5 458.1 L320.0 457.8 L318.6 457.4 L317.1 457.7 L315.7 458.8 L314.2 457.8 L312.8 457.7 L311.3 457.7 L309.9 457.3 L308.4 457.6 Z" fill="#ff0000" stroke="#ff0000" stroke-width="1"/></g>
<g stroke="#262626" stroke-width="1" fill="none">
<rect x="96.5" y="390.5" width="638" height="95"/>
<path d="M132.5 485.5 V481.5 M132.5 390.5 V394.5" />
<path d="M220.5 485.5 V481.5 M220.5 390.5 V394.5" />
<path d="M308.5 485.5 V481.5 M308.5 390.5 V394.5" />
<path d="M396.5 485.5 V481.5 M396.5 390.5 V394.5" />
<path d="M484.5 485.5 V481.5 M484.5 390.5 V394.5" />
<path d="M572.5 485.5 V481.5 M572.5 390.5 V394.5" />
<path d="M660.5 485.5 V481.5 M660.5 390.5 V394.5" />
<path d="M96.5 403.5 H100.5 M734.5 403.5 H730.5" />
<path d="M96.5 421.5 H100.5 M734.5 421.5 H730.5" />
<path d="M96.5 438.5 H100.5 M734.5 438.5 H730.5" />
<path d="M96.5 455.5 H100.5 M734.5 455.5 H730.5" />
<path d="M96.5 473.5 H100.5 M734.5 473.5 H730.5" />
</g>
<g fill="#262626" font-size="13" text-anchor="middle">
<text x="132.5" y="506.5">-2</text>
<text x="220.5" y="506.5">-1</text>
<text x="308.5" y="506.5">0</text>
<text x="396.5" y="506.5">1</text>
<text x="484.5" y="506.5">2</text>
<text x="572.5" y="506.5">3</text>
<text x="660.5" y="506.5">4</text>
</g><g fill="#262626" font-size="13" text-anchor="end">
<text x="89.5" y="408">15</text>
<text x="89.5" y="425.5">10</text>
<text x="89.5" y="443">5</text>
<text x="89.5" y="460">0</text>
<text x="89.5" y="477.5">-5</text>
</g>
<g font-size="15" font-weight="bold" text-anchor="middle" fill="#000"><text x="416" y="343">Fitting</text><text x="416" y="363">Radius of curvature = 4.038m</text><text x="416" y="383">Fitting Score = 0.054734</text></g>
<g fill="#262626"><text x="97" y="387.0" font-size="11">×</text><text x="107" y="387.5" font-size="13">10</text><text x="122.5" y="381.5" font-size="10">-7</text></g>
<g fill="#262626"><text x="700" y="528.0" font-size="11">×</text><text x="710" y="528.5" font-size="13">10</text><text x="725.5" y="522.5" font-size="10">-3</text></g>
</svg>
<!-- /FIG2 CHARTS -->
</body></html>
